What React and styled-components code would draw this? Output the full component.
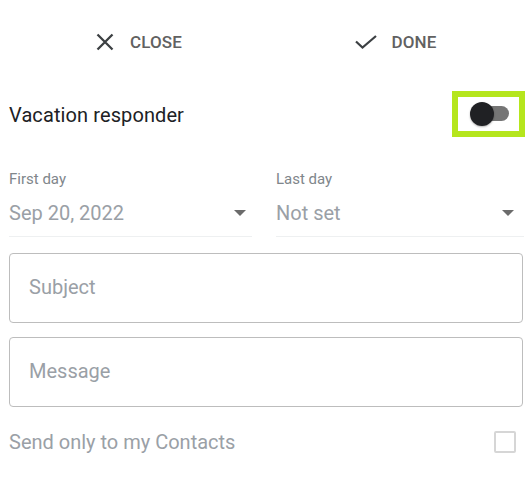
import React from "react";
import styled, { createGlobalStyle } from "styled-components";

const Global = createGlobalStyle`
  html, body { margin: 0; padding: 0; background: #fff; }
  body { font-family: Roboto, "Noto Sans", "Liberation Sans", sans-serif; }
`;

const Page = styled.div`
  width: 532px;
  height: 494px;
  background: #fff;
  overflow: hidden;
`;

const TopBar = styled.div`
  display: grid;
  grid-template-columns: 1fr 1fr;
  height: 84px;
  align-items: center;
`;

const BarButton = styled.div`
  display: flex;
  align-items: center;
  justify-content: center;
  gap: ${(p) => p.$gap}px;
  padding-left: ${(p) => p.$shift}px;
  padding-right: ${(p) => p.$pr || 0}px;
  font-size: 17px;
  font-weight: 500;
  color: #616161;
  letter-spacing: 0.1px;
`;

const Body = styled.div`
  padding: 0 8px 0 9px;
`;

const HeaderRow = styled.div`
  display: flex;
  align-items: center;
  justify-content: space-between;
  height: 62px;
`;

const Title = styled.div`
  font-size: 20px;
  color: #202124;
  letter-spacing: 0.1px;
`;

const Highlight = styled.div`
  height: 34px;
  border: 6px solid #b5e61d;
  display: flex;
  align-items: center;
  justify-content: flex-start;
  padding-left: 12px;
  box-sizing: content-box;
  width: 49px;
  margin-right: -1px;
  margin-top: -3px;
`;

const Switch = styled.div`
  position: relative;
  width: 39px;
  height: 24px;
  display: flex;
  align-items: center;
`;

const Track = styled.div`
  margin-left: 12px;
  width: 27px;
  height: 15px;
  border-radius: 8px;
  background: #757575;
`;

const Knob = styled.div`
  position: absolute;
  left: 0;
  top: 0;
  width: 24px;
  height: 24px;
  border-radius: 50%;
  background: #202124;
  box-shadow: 0 1px 2px rgba(0, 0, 0, 0.3);
`;

const DateRow = styled.div`
  display: grid;
  grid-template-columns: 243px 1fr;
  column-gap: 24px;
  margin-top: 25px;
`;

const DateField = styled.div`
  display: flex;
  flex-direction: column;
  border-bottom: 1px solid #eef0f1;
  padding-bottom: 11px;
`;

const Label = styled.div`
  font-size: 15px;
  color: #80868b;
  line-height: 16px;
`;

const ValueRow = styled.div`
  display: flex;
  align-items: center;
  justify-content: space-between;
  margin-top: 14px;
  height: 24px;
`;

const Value = styled.div`
  font-size: 20px;
  color: #9aa0a6;
`;

const Caret = styled.div`
  width: 0;
  height: 0;
  border-left: 6px solid transparent;
  border-right: 6px solid transparent;
  border-top: 6px solid #6b6b6b;
  margin-right: ${(p) => p.$mr}px;
`;

const Fields = styled.div`
  display: flex;
  flex-direction: column;
  gap: 14px;
  margin-top: 16px;
  margin-right: 1px;
`;

const TextBox = styled.div`
  height: 68px;
  border: 1px solid #bdbdbd;
  border-radius: 4px;
  display: flex;
  align-items: center;
  padding-left: 19px;
  padding-bottom: 2px;
  box-sizing: border-box;
  height: 70px;
  font-size: 20px;
  color: #9aa0a6;
`;

const SendRow = styled.div`
  display: flex;
  align-items: center;
  justify-content: space-between;
  margin-top: 22px;
  height: 26px;
`;

const SendText = styled.div`
  font-size: 20px;
  color: #9aa0a6;
`;

const Checkbox = styled.div`
  width: 18px;
  height: 18px;
  border: 2px solid #d6d6d6;
  border-radius: 2px;
  margin-right: 8px;
`;

const CloseIcon = () => (
  <svg width="18" height="18" viewBox="0 0 18 18">
    <path d="M1.5 1.5 L16.5 16.5 M16.5 1.5 L1.5 16.5" stroke="#3c4043" strokeWidth="2.3" fill="none" />
  </svg>
);

const CheckIcon = () => (
  <svg width="22" height="14" viewBox="0 0 22 14">
    <polyline points="1,6.5 7.5,12.5 21,1" stroke="#3c4043" strokeWidth="2.2" fill="none" />
  </svg>
);

export default function App() {
  return (
    <Page>
      <Global />
      <TopBar>
        <BarButton $gap={16} $shift={12}>
          <CloseIcon />
          <span>CLOSE</span>
        </BarButton>
        <BarButton $gap={15} $shift={0} $pr={7}>
          <CheckIcon />
          <span>DONE</span>
        </BarButton>
      </TopBar>
      <Body>
        <HeaderRow>
          <Title>Vacation responder</Title>
          <Highlight>
            <Switch>
              <Track />
              <Knob />
            </Switch>
          </Highlight>
        </HeaderRow>
        <DateRow>
          <DateField>
            <Label>First day</Label>
            <ValueRow>
              <Value>Sep 20, 2022</Value>
              <Caret $mr={6} />
            </ValueRow>
          </DateField>
          <DateField>
            <Label>Last day</Label>
            <ValueRow>
              <Value>Not set</Value>
              <Caret $mr={10} />
            </ValueRow>
          </DateField>
        </DateRow>
        <Fields>
          <TextBox>Subject</TextBox>
          <TextBox>Message</TextBox>
        </Fields>
        <SendRow>
          <SendText>Send only to my Contacts</SendText>
          <Checkbox />
        </SendRow>
      </Body>
    </Page>
  );
}
